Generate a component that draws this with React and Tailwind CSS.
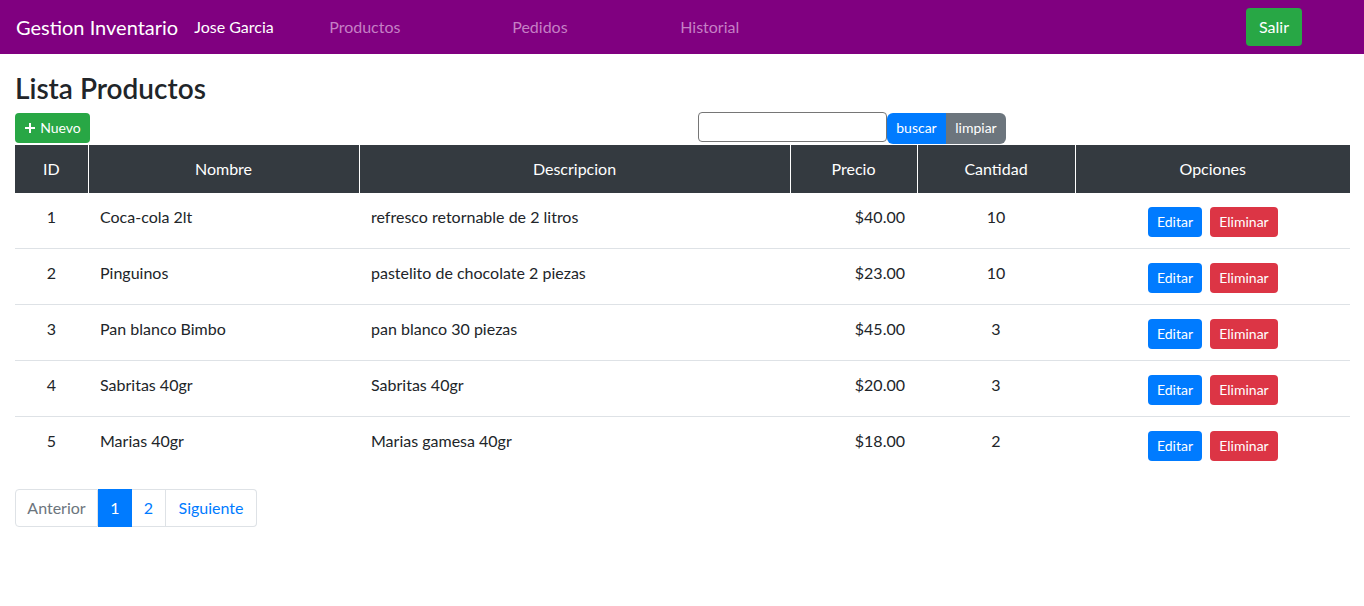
const PRODUCTOS = [
  { id: 1, nombre: 'Coca-cola 2lt', descripcion: 'refresco retornable de 2 litros', precio: 40, cantidad: 10 },
  { id: 2, nombre: 'Pinguinos', descripcion: 'pastelito de chocolate 2 piezas', precio: 23, cantidad: 10 },
  { id: 3, nombre: 'Pan blanco Bimbo', descripcion: 'pan blanco 30 piezas', precio: 45, cantidad: 3 },
  { id: 4, nombre: 'Sabritas 40gr', descripcion: 'Sabritas 40gr', precio: 20, cantidad: 3 },
  { id: 5, nombre: 'Marias 40gr', descripcion: 'Marias gamesa 40gr', precio: 18, cantidad: 2 },
]

function Navbar() {
  return (
    <nav className="h-[54px] bg-[#800080] flex items-center pl-4 pr-[62px]">
      <span className="text-white text-[20px] mr-4">Gestion Inventario</span>
      <span className="text-white text-base w-[135px]">Jose Garcia</span>
      <a className="text-[#c57fc5] text-base w-[183px]">Productos</a>
      <a className="text-[#c57fc5] text-base w-[168px]">Pedidos</a>
      <a className="text-[#c57fc5] text-base">Historial</a>
      <button className="ml-auto bg-[#28a745] text-white text-base h-[38px] w-[56px] rounded">Salir</button>
    </nav>
  )
}

export default function App() {
  return (
    <div className="min-h-[606px] bg-white text-[#212529]" style={{ fontFamily: 'Lato, "Open Sans", sans-serif' }}>
      <Navbar />
      <div className="px-[15px] pt-[18px]">
        <h2 className="text-[28px] font-semibold leading-[1.2] mb-[6px]">Lista Productos</h2>
        <div className="flex items-end h-[31px] mb-[2px]">
          <button className="bg-[#28a745] text-white text-sm h-[30px] w-[75px] rounded flex items-center justify-center gap-1">
            <svg width="12" height="12" viewBox="0 0 12 12"><path d="M6 1v10M1 6h10" stroke="white" strokeWidth="2" /></svg>
            Nuevo
          </button>
          <div className="flex items-start ml-[608px] h-[31px]">
            <input className="w-[189px] h-[30px] border border-[#767676] rounded-sm" />
            <button className="bg-[#007bff] text-white text-sm h-[31px] w-[59px] rounded-l-md mt-px">buscar</button>
            <button className="bg-[#6c757d] text-white text-sm h-[31px] w-[60px] rounded-r-md mt-px">limpiar</button>
          </div>
        </div>
        <table className="w-[1335px] table-fixed border-collapse text-base">
          <colgroup>
            <col className="w-[73px]" />
            <col className="w-[271px]" />
            <col className="w-[431px]" />
            <col className="w-[127px]" />
            <col className="w-[158px]" />
            <col className="w-[275px]" />
          </colgroup>
          <thead>
            <tr className="bg-[#343a40] text-white h-[48px]">
              {['ID', 'Nombre', 'Descripcion', 'Precio', 'Cantidad', 'Opciones'].map(h => (
                <th key={h} className="font-normal text-center border-x border-white first:border-l-0 last:border-r-0">{h}</th>
              ))}
            </tr>
          </thead>
          <tbody>
            {PRODUCTOS.map((p, i) => (
              <tr key={p.id} className={`h-[56px] align-top ${i > 0 ? 'border-t border-[#dee2e6]' : ''}`}>
                <td className="pt-3 text-center">{p.id}</td>
                <td className="pt-3 px-3">{p.nombre}</td>
                <td className="pt-3 px-3">{p.descripcion}</td>
                <td className="pt-3 px-3 text-right">${p.precio.toFixed(2)}</td>
                <td className="pt-3 text-center">{p.cantidad}</td>
                <td className="pt-[14px]">
                  <div className="flex justify-center gap-2 pl-px">
                    <button className="bg-[#007bff] text-white text-sm h-[30px] w-[54px] rounded">Editar</button>
                    <button className="bg-[#dc3545] text-white text-sm h-[30px] w-[68px] rounded">Eliminar</button>
                  </div>
                </td>
              </tr>
            ))}
          </tbody>
        </table>
        <div className="flex mt-4 h-[38px] text-base">
          <span className="w-[83px] flex items-center justify-center border border-[#dee2e6] rounded-l text-[#6c757d]">Anterior</span>
          <span className="w-[34px] flex items-center justify-center bg-[#007bff] text-white">1</span>
          <span className="w-[34px] flex items-center justify-center border border-[#dee2e6] border-l-0 text-[#007bff]">2</span>
          <span className="w-[91px] flex items-center justify-center border border-[#dee2e6] border-l-0 rounded-r text-[#007bff]">Siguiente</span>
        </div>
      </div>
    </div>
  )
}
